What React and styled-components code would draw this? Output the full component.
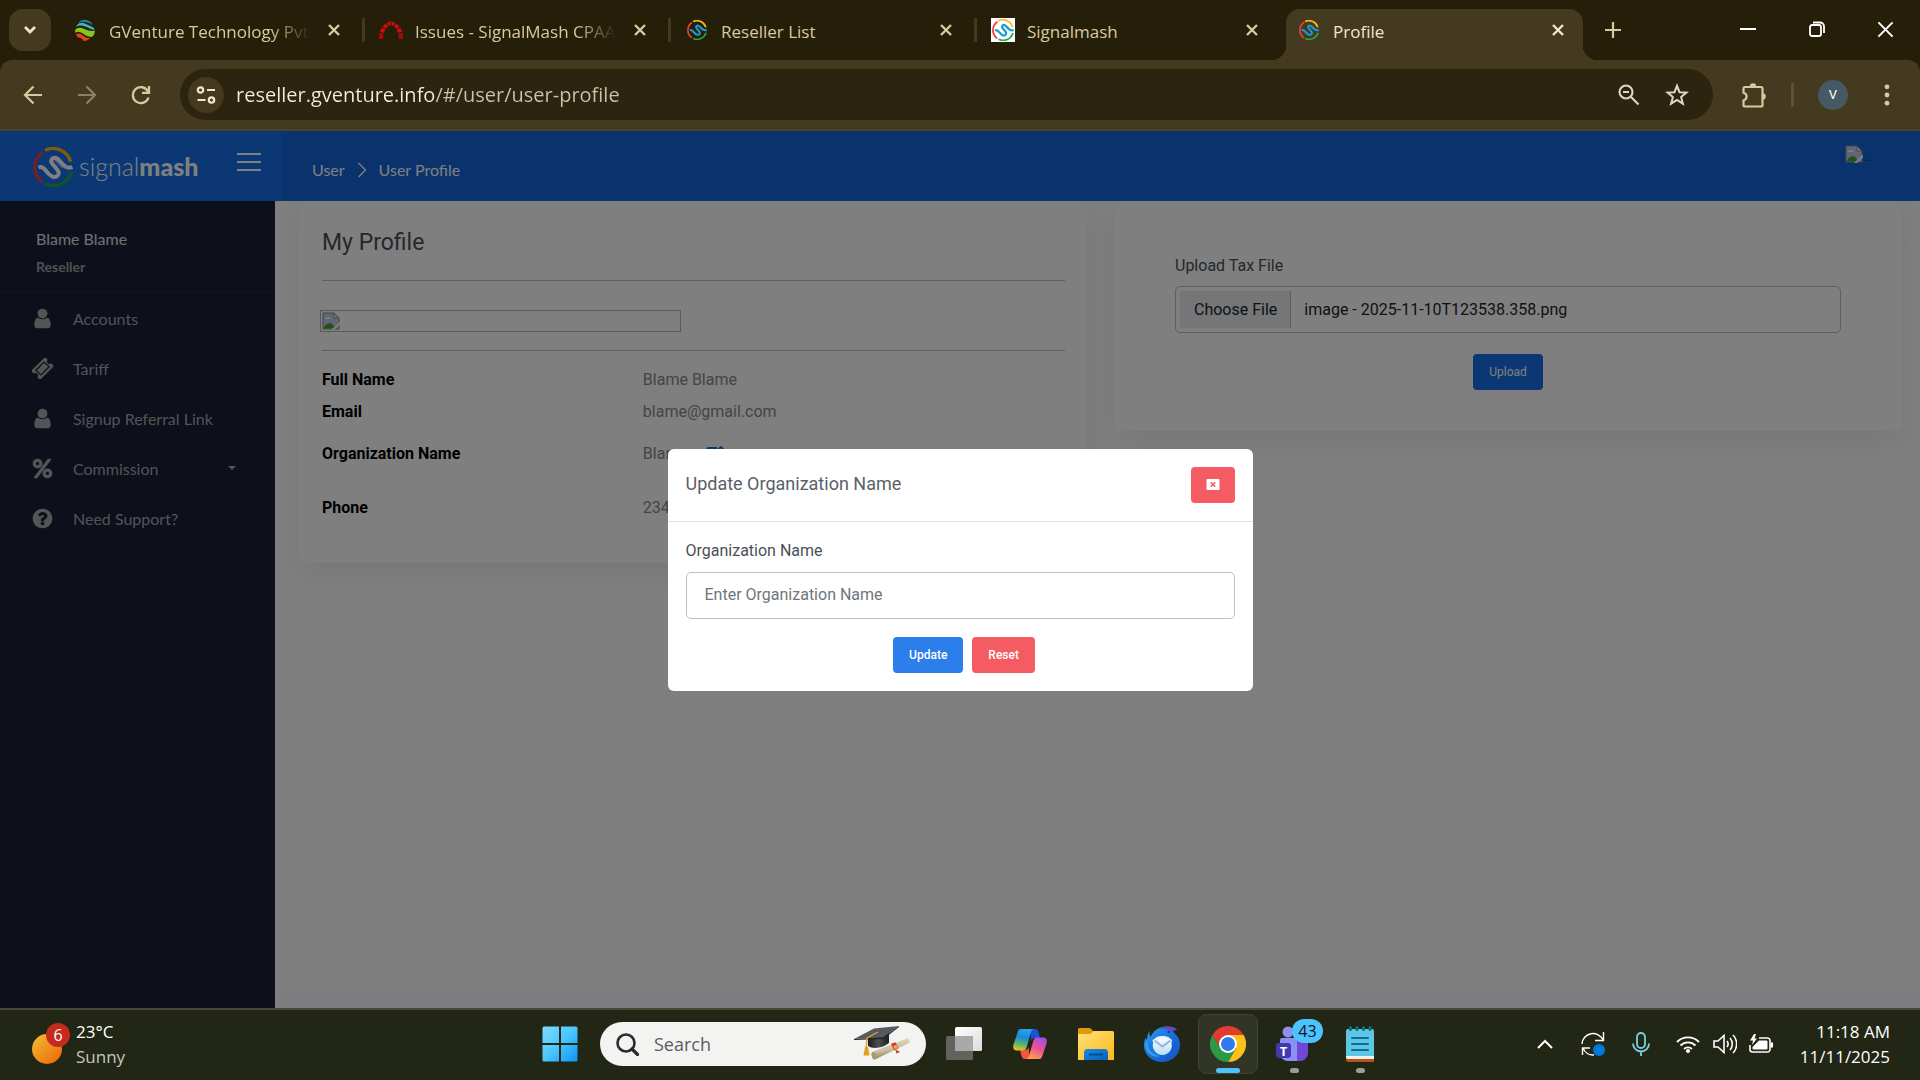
import React from "react";
import styled, { createGlobalStyle, css } from "styled-components";

const system = '"Open Sans", "Noto Sans", sans-serif';
const body = 'Roboto, "Liberation Sans", sans-serif';
const nav = 'Lato, "Open Sans", sans-serif';

const Global = createGlobalStyle`
  *, *::before, *::after { box-sizing: border-box; }
  html, body, #root { height: 100%; }
  body { margin: 0; background: #251f09; }
  button { font: inherit; color: inherit; border: 0; padding: 0; background: none; cursor: pointer; }
  svg { display: block; flex: none; }
`;

const Screen = styled.div`
  min-height: 100vh;
  display: flex;
  flex-direction: column;
  font-family: ${system};
`;

/* ---------- browser tab strip ---------- */

const TabStrip = styled.div`
  height: 60px;
  padding: 9px 0 0 9px;
  display: flex;
  background: #251f09;
  color: #d9c9a0;
`;

const TabSearch = styled.button`
  width: 42px;
  height: 42px;
  margin-right: 8px;
  border-radius: 14px;
  background: #433a1f;
  display: grid;
  place-items: center;
  flex: none;
`;

const flare = css`
  content: "";
  position: absolute;
  bottom: 0;
  width: 14px;
  height: 14px;
`;

const Tab = styled.div`
  position: relative;
  flex: 0 1 ${(p) => (p.$active ? 297 : 306)}px;
  min-width: 0;
  height: ${(p) => (p.$active ? 51 : 42)}px;
  padding: ${(p) => (p.$active ? "0 13px 9px 11px" : "0 19px 0 14px")};
  margin-left: ${(p) => (p.$active ? 3 : 0)}px;
  display: flex;
  align-items: center;
  gap: 12px;
  border-radius: 14px 14px 0 0;
  ${(p) =>
    p.$active
      ? css`
          background: #433a1f;
          color: #efe6cf;
          &::before { ${flare} right: 100%; background: radial-gradient(circle at 0 0, transparent 14px, #433a1f 14px); }
          &::after { ${flare} left: 100%; background: radial-gradient(circle at 100% 0, transparent 14px, #433a1f 14px); }
        `
      : ""}
`;

const TabDivider = styled.span`
  width: 3px;
  height: 24px;
  margin: 9px 0 0 -3px;
  background: #433a1f;
  flex: none;
`;

const TabTitle = styled.button`
  flex: 1;
  min-width: 0;
  height: 28px;
  margin-top: 3px;
  overflow: hidden;
  white-space: nowrap;
  text-align: left;
  font-size: 17px;
  line-height: 28px;
  ${(p) => (p.$fade ? "mask-image: linear-gradient(to left, transparent, #000 40px);" : "")}
`;

const Favicon = styled.span`
  width: 24px;
  height: 24px;
  display: grid;
  place-items: center;
  flex: none;
  background: ${(p) => (p.$plate ? "#fff" : "transparent")};
`;

const TabClose = styled.button`
  width: 24px;
  height: 24px;
  display: grid;
  place-items: center;
  flex: none;
`;

const NewTab = styled.button`
  width: 42px;
  height: 42px;
  margin-left: 9px;
  display: grid;
  place-items: center;
  flex: none;
`;

const WindowControls = styled.div`
  margin: -9px 0 0 auto;
  display: flex;
  color: #fff;
`;

const WindowButton = styled.button`
  width: 69px;
  height: 58px;
  display: grid;
  place-items: center;
`;

/* ---------- browser toolbar ---------- */

const ToolbarBack = styled.div`
  background: #251f09;
`;

const Toolbar = styled.div`
  height: 71px;
  padding: 9px 12px 9px 12px;
  display: flex;
  align-items: center;
  background: #433a1f;
  border-radius: 12px 12px 0 0;
  border-bottom: 2px solid #4b4229;
  color: #d9c9a0;
`;

const NavButton = styled.button`
  width: 42px;
  height: 42px;
  margin-right: 12px;
  display: grid;
  place-items: center;
  flex: none;
  opacity: ${(p) => (p.disabled ? 0.5 : 1)};
`;

const AddressBar = styled.form`
  flex: 1;
  height: 51px;
  margin: 0 20px 0 6px;
  padding: 0 16px 0 8px;
  display: flex;
  align-items: center;
  border-radius: 26px;
  background: #2d240f;
  color: #e0d5c0;
`;

const SiteInfo = styled.button`
  width: 36px;
  height: 36px;
  border-radius: 50%;
  background: #433a1f;
  display: grid;
  place-items: center;
  flex: none;
`;

const Address = styled.input`
  flex: 1;
  min-width: 0;
  margin-left: 12px;
  padding: 0;
  border: 0;
  outline: 0;
  font: 20px/30px ${system};
  background: linear-gradient(to right, #f4ede0 198px, #cdc2ac 198px);
  background-clip: text;
  color: transparent;
`;

const AddressAction = styled.button`
  width: 40px;
  height: 40px;
  margin-left: 8px;
  display: grid;
  place-items: center;
`;

const ToolbarButton = styled.button`
  width: 42px;
  height: 42px;
  display: grid;
  place-items: center;
  flex: none;
`;

const ToolbarDivider = styled.span`
  width: 3px;
  height: 24px;
  margin: 0 19px 0 16px;
  background: #5e5335;
`;

const Avatar = styled.button`
  width: 30px;
  height: 30px;
  margin: 0 18px 0 5px;
  border-radius: 50%;
  background: #465a66;
  color: #fff;
  font: 13px/30px ${body};
  flex: none;
`;

/* ---------- reseller portal ---------- */

const Portal = styled.div`
  position: relative;
  flex: 1;
  display: flex;
  flex-direction: column;
  background: #fff;
  overflow: hidden;
`;

const Header = styled.header`
  height: 70px;
  display: flex;
  background: #1466da;
  color: #fff;
`;

const Brand = styled.div`
  width: 281px;
  padding: 0 20px 0 33px;
  display: flex;
  align-items: center;
  background: #1670ea;
`;

const BrandLink = styled.a`
  display: flex;
  align-items: center;
  gap: 6px;
  padding-top: 2px;
  color: #fff;
  text-decoration: none;
  font: 300 25px/30px ${nav};
  span { padding-bottom: 3px; }
  b { font-weight: 900; }
`;

const MenuToggle = styled.button`
  width: 24px;
  height: 24px;
  margin: 0 0 8px auto;
  display: grid;
  place-items: center;
`;

const Crumbs = styled.nav`
  padding: 7px 0 0 31px;
  display: flex;
  align-items: center;
  gap: 12px;
  font: 400 16px/24px ${nav};
  a { color: #fff; text-decoration: none; }
`;

const AccountMenu = styled.button`
  height: 18px;
  margin: 14px 47px 0 auto;
  display: flex;
  align-items: flex-end;
  gap: 1px;
  color: #333;
  font: 12px/12px ${body};
`;

const Shell = styled.div`
  flex: 1;
  display: flex;
`;

const Sidebar = styled.aside`
  width: 275px;
  background: #1a1e34;
  font-family: ${nav};
  flex: none;
`;

const Identity = styled.div`
  height: 92px;
  padding: 26px 36px 0;
  border-bottom: 1px solid #272c40;
`;

const IdentityName = styled.div`
  font-size: 16px;
  line-height: 24px;
  color: #e2e2e4;
`;

const IdentityRole = styled.div`
  margin-top: 4px;
  font-size: 14px;
  font-weight: 700;
  line-height: 24px;
  color: #a0a2a6;
`;

const MenuLink = styled.a`
  height: 50px;
  padding: 0 39px 0 31px;
  display: flex;
  align-items: center;
  color: #a6a8ac;
  font-size: 16px;
  text-decoration: none;
  span { margin-left: 19px; }
  svg { fill: currentColor; }
`;

const Caret = styled.i`
  margin-left: auto;
  border: 4px solid transparent;
  border-top-color: currentColor;
  border-bottom: 0;
`;

const Content = styled.main`
  flex: 1;
  min-width: 0;
  padding-left: 6px;
  display: flex;
  flex-direction: column;
  overflow: hidden;
  font-family: ${body};
`;

const Cards = styled.div`
  flex: 1;
  padding: 0 18px;
  display: grid;
  grid-template-columns: 1fr 1fr;
  gap: 27px;
  align-items: start;
`;

const Footer = styled.footer`
  height: 15px;
  background: #f8f9fd;
`;

const Card = styled.section`
  border-radius: 5px;
  background: #fff;
  box-shadow: 0 10px 32px rgba(8, 21, 66, 0.08);
  padding: ${(p) => p.$pad};
`;

const CardTitle = styled.h1`
  margin: 0 0 18px;
  font-size: 23px;
  font-weight: 400;
  line-height: 38px;
  color: #495057;
`;

const Rule = styled.hr`
  height: 1px;
  margin: 0;
  border: 0;
  background: #bfbfbf;
`;

const Photo = styled.div`
  width: 48%;
  height: 18px;
  margin: 31px 0 20px;
  outline: 1px solid #b4b4b4;
  outline-offset: 1px;
`;

const Facts = styled.dl`
  margin: 13px 0 0;
`;

const Fact = styled.div`
  height: ${(p) => p.$h}px;
  display: grid;
  grid-template-columns: 19fr 25fr;
  align-items: center;
  font-size: 16px;
  line-height: 24px;
  dt { font-weight: 700; color: #000; }
  dd { margin: 0; display: flex; align-items: center; gap: 18px; color: #848a90; }
`;

const EditButton = styled.button`
  color: #1670ea;
`;

const FieldLabel = styled.label`
  display: block;
  margin-bottom: ${(p) => p.$gap}px;
  font-size: 16px;
  line-height: 24px;
  color: #495057;
`;

const FilePicker = styled.div`
  position: relative;
  height: 47px;
  padding: 4px;
  display: flex;
  align-items: center;
  gap: 13px;
  border: 1px solid #bfbfbf;
  border-radius: 5px;
  font-size: 16px;
  color: #212529;
  input { position: absolute; inset: 0; width: 100%; opacity: 0; }
`;

const FileButton = styled.span`
  height: 37px;
  padding: 0 13px 0 14px;
  border-right: 1px solid #bfbfbf;
  background: #e9ecef;
  line-height: 37px;
`;

const Actions = styled.div`
  display: flex;
  justify-content: center;
  gap: 9px;
  margin-top: ${(p) => p.$top}px;
  padding-left: ${(p) => p.$shift || 0}px;
`;

const Button = styled.button`
  height: 36px;
  padding: 0 ${(p) => (p.$icon ? 15 : 16)}px;
  border-radius: 4px;
  background: ${(p) => (p.$danger ? "#f45b62" : p.$deep ? "#1670ea" : "#2c7eea")};
  color: #fff;
  font: ${(p) => (p.$deep ? 400 : 500)} 12px/36px ${body};
`;

const Backdrop = styled.div`
  position: absolute;
  inset: 0;
  display: grid;
  place-items: center;
  background: rgba(0, 0, 0, 0.5);
`;

const Dialog = styled.div`
  width: 585px;
  max-width: 100%;
  border-radius: 6px;
  background: #fff;
  font-family: ${body};
`;

const DialogHead = styled.div`
  padding: 18px;
  display: flex;
  align-items: flex-start;
  justify-content: space-between;
  border-bottom: 1px solid #dee2e6;
`;

const DialogTitle = styled.h2`
  margin: 0;
  font-size: 18px;
  font-weight: 400;
  line-height: 34px;
  color: #5b6068;
`;

const DialogBody = styled.form`
  padding: 17px 18px 18px;
`;

const TextField = styled.input`
  display: block;
  width: 100%;
  height: 47px;
  padding: 0 18px 2px;
  border: 1px solid #bfbfbf;
  border-radius: 5px;
  outline: 0;
  font: 16px/24px ${body};
  color: #212529;
  &::placeholder { color: #6f757a; opacity: 1; }
`;

/* ---------- taskbar ---------- */

const Taskbar = styled.footer`
  height: 72px;
  padding-bottom: 2px;
  display: grid;
  grid-template-columns: 1fr auto 1fr;
  background: #222615;
  border-top: 2px solid #46483a;
  color: #fff;
  font-size: 17px;
  line-height: 25px;
`;

const Weather = styled.button`
  justify-self: start;
  margin-left: 32px;
  display: flex;
  align-items: center;
  gap: 6px;
  text-align: left;
  span { display: block; }
  small { display: block; font-size: 17px; color: #c5c6c0; }
`;

const Apps = styled.div`
  display: flex;
  align-items: center;
`;

const AppSlot = styled.button`
  position: relative;
  width: 60px;
  height: 60px;
  margin: 0 3px;
  display: grid;
  place-items: center;
  border-radius: 8px;
  border: 1px solid ${(p) => (p.$active ? "#3f4234" : "transparent")};
  background: ${(p) => (p.$active ? "#313526" : "transparent")};
  ${(p) =>
    p.$running
      ? css`
          &::after {
            content: "";
            position: absolute;
            bottom: 0;
            left: calc(50% - ${p.$active ? 12 : 4}px);
            width: ${p.$active ? 24 : 9}px;
            height: 5px;
            border-radius: 3px;
            background: ${p.$active ? "#4cc2ff" : "#9b9c94"};
          }
        `
      : ""}
`;

const Count = styled.span`
  position: absolute;
  top: 4px;
  left: 27px;
  width: 31px;
  height: 24px;
  border-radius: 12px;
  background: #4cc2ff;
  color: #10171c;
  font-size: 16px;
  line-height: 24px;
`;

const SearchBox = styled.label`
  width: 326px;
  height: 44px;
  margin: 0 5px 0 7px;
  padding: 0 16px;
  display: flex;
  align-items: center;
  border-radius: 22px;
  background: #f3f3f2;
  input {
    flex: 1;
    min-width: 0;
    margin-left: 15px;
    padding: 0;
    border: 0;
    outline: 0;
    background: none;
    font: 18px/28px ${system};
    color: #5c5c5c;
  }
  input::placeholder { color: #5c5c5c; opacity: 1; }
`;

const Tray = styled.div`
  justify-self: end;
  margin-right: 30px;
  display: flex;
  align-items: center;
`;

const TrayButton = styled.button`
  width: ${(p) => p.$w}px;
  height: 48px;
  display: grid;
  place-items: center;
`;

const Clock = styled.button`
  width: 104px;
  margin-left: 3px;
  text-align: right;
  time { display: block; }
`;

/* ---------- drawings ---------- */

const Cross = ({ size = 12, w = 2.4 }) => (
  <svg width={size} height={size} viewBox="0 0 12 12" stroke="currentColor" strokeWidth={w} fill="none">
    <path d="M1 1l10 10M11 1L1 11" />
  </svg>
);

const Mark = ({ size, white }) => (
  <svg width={size} height={size} viewBox="0 0 40 40" fill="none" strokeLinecap="butt">
    <path d="M12 3.2A18.4 18.4 0 0 1 37.6 14.8" stroke="#fdb913" strokeWidth="3.2" />
    <path d="M10 5A18.4 18.4 0 0 0 9.6 35.4" stroke="#ee4036" strokeWidth="3.2" />
    <path d="M12 36.8A18.4 18.4 0 0 0 38 25.5" stroke="#22ab4b" strokeWidth="3.2" />
    <path
      d="M5.5 20.5c4-1.500 5.500 1 8.500 4.500s6 6.500 9.500 4.500c4-2.500 2-5.500-.5-8.500s-7-6.500-3.500-9.500c3.500-2.500 6.500 1.500 9.500 5s6 5.500 10.500 3.500"
      stroke={white ? "#fff" : "#1c9ad6"}
      strokeWidth="4"
    />
    <path d="M11 20.500l6.500 7.500M22 13l7.500 8" stroke={white ? "#fff" : "#1c9ad6"} strokeWidth="1.500" opacity=".5" />
  </svg>
);

const VentureIcon = () => (
  <svg width="20" height="22" viewBox="0 0 20 22">
    <path d="M3.500 3.500C6 0 13-.5 17 4.500l.5 1.500C13 3 8 2 3.500 3.500z" fill="#2b7f96" />
    <path d="M1 8c2-5 6-5 10-3 3 1.500 5 2 8 4l.3 2c-4-1-6.500-2.500-9.300-3.500C6.500 6 3.500 6.500 1 8z" fill="#39b3d6" />
    <path d="M0 11.500c1.500-3.500 5.500-3.500 9.500-1.500 3.500 1.700 7 2.500 10.300 1.500 0 3.500-1 5.500-3.300 6.500-3 0-5-1-8-3-4-2.300-6-3-8.200-1z" fill="#8cc21c" />
    <path d="M1 15.500c2-1.800 4.500-1 7 1s4.500 2.700 7 2.500c-1.500 1.700-4 3-6.500 3C7.500 19 4 18.500 2.500 18z" fill="#e9411b" />
  </svg>
);

const ArchIcon = () => (
  <svg width="24" height="18" viewBox="0 0 24 18" fill="#d00d0d">
    <path d="M0 12l4.500.5-.3 5.500H0zM19.500 12.500L24 12v6h-4.200z" fill="#a80808" />
    <path d="M.8 10.800l2-4.300 3.600 2-1.600 3.200zM3.500 5.500L7 2.200 9 5.600 6.800 7.700zM8 1.700L11.500 0v4.200L9.700 5zM12.500 0L16 1.700 14.300 5l-1.800-.8zM17 2.200l3.500 3.300-3.300 2.200L15 5.600zM21.200 6.500l2 4.300-4 .9-1.600-3.200z" />
  </svg>
);

const Broken = () => (
  <svg width="18" height="18" viewBox="0 0 18 18">
    <path d="M1 1h11l5 5v11H1z" fill="#bccdf0" stroke="#8f8f8f" />
    <path d="M12 1v5h5z" fill="#f1f1f1" stroke="#8f8f8f" />
    <path d="M3 7c0-2 2-2 2.500-1C6.500 4 9 5 8.500 7z" fill="#fff" />
    <path d="M1.500 16.500c2-5 7-7 10-3l1 3z" fill="#43a426" />
    <path d="M18 9.500L9 18h3l6-5.500z" fill="#fff" />
  </svg>
);

const glyphs = {
  user: "M1536 1399q0 109-62.500 187t-150.500 78h-854q-88 0-150.500-78t-62.500-187q0-85 8.500-160.500t31.500-152 58.500-131 94-89 134.500-34.500q131 128 313 128t313-128q76 0 134.500 34.500t94 89 58.500 131 31.500 152 8.500 160.500zm-256-887q0 159-112.500 271.500t-271.500 112.500-271.500-112.500-112.500-271.500 112.500-271.500 271.500-112.500 271.500 112.500 112.500 271.500z",
  ticket:
    "M1024 452l316 316-572 572-316-316zm-211 979l618-618q19-19 19-45t-19-45l-362-362q-18-18-45-18t-45 18l-618 618q-19 19-19 45t19 45l362 362q18 18 45 18t45-18zm889-637l-907 908q-37 37-90.500 37t-90.500-37l-126-126q56-56 56-136t-56-136-136-56-136 56l-125-126q-37-37-37-90.500t37-90.500l907-906q37-37 90.500-37t90.500 37l125 125q-56 56-56 136t56 136 136 56 136-56l126 125q37 37 37 90.500t-37 90.500z",
  percent:
    "M1408 1280q0-52-38-90t-90-38-90 38-38 90 38 90 90 38 90-38 38-90zm-768-768q0-52-38-90t-90-38-90 38-38 90 38 90 90 38 90-38 38-90zm1024 768q0 159-112.500 271.500t-271.500 112.500-271.500-112.500-112.500-271.500 112.500-271.500 271.500-112.500 271.500 112.500 112.500 271.500zm-96-1088q0 20-13 38l-1056 1408q-19 26-51 26h-160q-26 0-45-19t-19-45q0-20 13-38l1056-1408q19-26 51-26h160q26 0 45 19t19 45zm-672 320q0 159-112.500 271.500t-271.500 112.500-271.500-112.500-112.500-271.500 112.500-271.500 271.500-112.500 271.500 112.500 112.500 271.500z",
  help: "M1024 1376v-192q0-14-9-23t-23-9h-192q-14 0-23 9t-9 23v192q0 14 9 23t23 9h192q14 0 23-9t9-23zm256-672q0-88-55.500-163t-138.500-116-170-41q-243 0-371 213-15 24 8 42l132 100q7 6 19 6 16 0 25-12 53-68 86-92 34-24 86-24 48 0 85.500 26t37.500 59q0 38-20 61t-68 45q-63 28-115.500 86.500t-52.500 125.500v36q0 14 9 23t23 9h192q14 0 23-9t9-23q0-19 21.500-49.500t54.500-49.500q32-18 49-28.500t46-35 44.500-48 28-60.500 12.500-81zm384 192q0 209-103 385.500t-279.500 279.500-385.500 103-385.500-103-279.500-279.500-103-385.500 103-385.500 279.500-279.500 385.500-103 385.500 103 279.500 279.500 103 385.500z",
};

const Glyph = ({ name }) => (
  <svg width="23" height="23" viewBox="0 0 1792 1792">
    <path d={glyphs[name]} />
  </svg>
);

const SunIcon = () => (
  <svg width="38" height="42" viewBox="0 0 38 42">
    <defs>
      <linearGradient id="sun" x1="0" y1="0" x2="1" y2="1">
        <stop offset="0.1" stopColor="#f2b632" />
        <stop offset="0.9" stopColor="#ef6a0c" />
      </linearGradient>
    </defs>
    <circle cx="15" cy="26" r="15" fill="url(#sun)" />
    <circle cx="26" cy="12" r="12" fill="#c42b1c" />
    <text x="26" y="18" fontSize="16" textAnchor="middle" fill="#fff">6</text>
  </svg>
);

const StartIcon = () => (
  <svg width="36" height="36" viewBox="0 0 36 36">
    <defs>
      <linearGradient id="win" x1="0" y1="0" x2="36" y2="36" gradientUnits="userSpaceOnUse">
        <stop offset="0" stopColor="#7fdcff" />
        <stop offset="0.5" stopColor="#4ac6ff" />
        <stop offset="1" stopColor="#0a93f5" />
      </linearGradient>
    </defs>
    <path d="M2 .5h15v16.500H.5V2A1.500 1.500 0 0 1 2 .5zM19 .5h15A1.500 1.500 0 0 1 35.500 2v15H19zM.5 19H17v16.500H2A1.500 1.500 0 0 1 .5 34zM19 19h16.500v15a1.500 1.500 0 0 1-1.500 1.500H19z" fill="url(#win)" />
  </svg>
);

const GraduateIcon = () => (
  <svg width="56" height="36" viewBox="0 0 56 36">
    <defs>
      <linearGradient id="cap" x1="0" y1="0" x2="1" y2="0">
        <stop offset="0" stopColor="#1d1f22" />
        <stop offset="0.5" stopColor="#4b4e53" />
        <stop offset="1" stopColor="#1d1f22" />
      </linearGradient>
      <linearGradient id="scroll" x1="0" y1="0" x2="0.3" y2="1">
        <stop offset="0" stopColor="#efe6cf" />
        <stop offset="0.6" stopColor="#cdbf9f" />
        <stop offset="1" stopColor="#8c7d5d" />
      </linearGradient>
    </defs>
    <path d="M14 11v9c5 3.500 15 2 21-3V7z" fill="url(#cap)" />
    <path d="M0 13L20 2.500 45 0 29 11.500z" fill="#565a60" />
    <path d="M0 13l29-1.500L45 0v1L29.500 13 0 14z" fill="#222427" />
    <path d="M24 6L13 12l-.8 10" stroke="#e0a21c" strokeWidth="1.400" fill="none" />
    <path d="M11 21h3l1.500 8.500H9.500z" fill="#e0a21c" />
    <path d="M18 26L53 12.500c2-.3 3.500 3 2 4.500L21 33.500c-3 0-4.500-5-3-7.500z" fill="url(#scroll)" />
    <ellipse cx="20" cy="29.800" rx="2" ry="3.800" fill="#a89775" transform="rotate(-20 20 29.800)" />
    <path d="M37 17.800l4.500-1.500 3 6-4.500 2z" fill="#d33a32" />
    <path d="M41 23l5 3-3.500 1.500z" fill="#d33a32" />
    <circle cx="41.500" cy="21" r="2" fill="#e7b24c" />
  </svg>
);

const TaskViewIcon = () => (
  <svg width="36" height="36" viewBox="0 0 36 36">
    <defs>
      <linearGradient id="tv" x1="0" y1="0" x2="1" y2="1">
        <stop offset="0" stopColor="#fff" />
        <stop offset="1" stopColor="#dcdcdc" />
      </linearGradient>
    </defs>
    <rect x="0" y="10" width="27" height="24" rx="1.500" fill="#62625f" />
    <rect x="9" y="1" width="27" height="24" rx="1.500" fill="url(#tv)" />
    <path d="M9 10h18v15H9z" fill="#a9a9a9" />
  </svg>
);

const CopilotIcon = () => (
  <svg width="36" height="34" viewBox="0 0 36 34">
    <defs>
      <linearGradient id="cpa" x1="0.4" y1="0" x2="0.2" y2="1">
        <stop offset="0" stopColor="#25a3f2" />
        <stop offset="0.35" stopColor="#1b86dd" />
        <stop offset="0.7" stopColor="#5fb866" />
        <stop offset="1" stopColor="#f2c41a" />
      </linearGradient>
      <linearGradient id="cpb" x1="0.8" y1="0" x2="0.3" y2="1">
        <stop offset="0" stopColor="#a04fe8" />
        <stop offset="0.5" stopColor="#ec4f95" />
        <stop offset="1" stopColor="#ffa24c" />
      </linearGradient>
    </defs>
    <path d="M18 2h5c2 0 3 1 3.500 3l1.500 6h-5c-2 0-3 1-3.500 3z" fill="#1d4fd8" />
    <path d="M18 32h-5c-2 0-3-1-3.500-3L8 23h5c2 0 3-1 3.500-3z" fill="#f0563a" />
    <path d="M9 2h13c-2 .5-2.700 2-3.300 4l-4 14c-.7 2.500-2 3.500-4.500 3.500H5C1.500 23.500.5 21 1.500 17.500l4-12C6.300 3 7 2 9 2z" fill="url(#cpa)" />
    <path d="M27 32H14c2-.5 2.700-2 3.300-4l4-14c.7-2.500 2-3.500 4.500-3.500H31c3.500 0 4.500 2.500 3.500 6l-4 12C29.700 31 29 32 27 32z" fill="url(#cpb)" />
  </svg>
);

const FolderIcon = () => (
  <svg width="36" height="34" viewBox="0 0 36 34">
    <defs>
      <linearGradient id="fld" x1="0" y1="0" x2="1" y2="1">
        <stop offset="0" stopColor="#ffe07a" />
        <stop offset="1" stopColor="#fbb917" />
      </linearGradient>
      <linearGradient id="fldb" x1="0" y1="0" x2="1" y2="1">
        <stop offset="0" stopColor="#1a8be0" />
        <stop offset="1" stopColor="#0a62b5" />
      </linearGradient>
    </defs>
    <path d="M1.500 1H11c1 0 1.500.3 2.200 1L16 5v8H0V2.500A1.500 1.500 0 0 1 1.500 1z" fill="#dd9a09" />
    <path d="M0 7h11c1 0 2-.3 2.700-1L15 4.500c.5-.4 1-.5 1.500-.5h18A1.500 1.500 0 0 1 36 5.500V33H0z" fill="url(#fld)" />
    <path d="M6 33v-7.500A3.500 3.500 0 0 1 9.500 22h17a3.500 3.500 0 0 1 3.500 3.500V33z" fill="url(#fldb)" />
    <path d="M11 27.500h14" stroke="#0b4a8a" strokeWidth="2" />
  </svg>
);

const BirdIcon = () => (
  <svg width="36" height="36" viewBox="0 0 36 36">
    <defs>
      <linearGradient id="bird" x1="0" y1="0" x2="1" y2="1">
        <stop offset="0" stopColor="#2fa0f5" />
        <stop offset="0.6" stopColor="#1468d8" />
        <stop offset="1" stopColor="#1c4fc0" />
      </linearGradient>
      <linearGradient id="mail" x1="0" y1="0" x2="0" y2="1">
        <stop offset="0" stopColor="#f4faff" />
        <stop offset="1" stopColor="#b9dcf8" />
      </linearGradient>
    </defs>
    <path d="M6 4.500C5 7 5.500 9.500 6.500 11 9 6 13 1.500 20 .7c6-.7 11 .8 13 3.300-3.500-.3-4.500 1-3.500 2.500C34 9.500 36 14 36 19c0 10-8 17-18 17S0 28.500 0 19.500c0-3 .6-5.500 1.500-7.500l1.500 2c0-4 1-7 3-9.500z" fill="url(#bird)" />
    <path d="M15.500 3C20-.5 30-.5 33 4c-3.500-.3-5 .3-5.500 2C24 3 20 2 15.500 3z" fill="#6d45c4" />
    <path d="M3 14c0 10 6 15 14 16C9 33 2 27 1.500 19z" fill="#39b4f2" opacity=".7" />
    <path d="M10.500 13h16a2 2 0 0 1 .8 3.500 9.500 9.500 0 1 1-18 0A2 2 0 0 1 10.500 13z" fill="url(#mail)" />
    <ellipse cx="18.500" cy="13.500" rx="8" ry="3.500" fill="#edf6fe" />
    <path d="M10.500 14.500l8 6 8-6" stroke="#8fb4dc" strokeWidth="1.800" fill="none" />
    <circle cx="24.500" cy="6" r="1" fill="#0c2d6b" />
  </svg>
);

const ChromeIcon = () => (
  <svg width="36" height="36" viewBox="0 0 36 36">
    <path d="M18 9h15.600A18 18 0 0 1 18 36l7.800-13.500z" fill="#fbc116" />
    <path d="M18 9h15.600A18 18 0 0 0 2.400 9l7.800 13.500z" fill="#e33b2e" />
    <path d="M10.200 22.500L2.400 9A18 18 0 0 0 18 36l7.800-13.500z" fill="#2a9a47" />
    <circle cx="18" cy="18" r="9" fill="#fff" />
    <circle cx="18" cy="18" r="7" fill="#2f7bee" />
  </svg>
);

const TeamsIcon = () => (
  <svg width="36" height="36" viewBox="2 0 36 36">
    <circle cx="14" cy="6" r="5.500" fill="#8f8ff0" />
    <path d="M20 12h11a3 3 0 0 1 3 3v12a8 8 0 0 1-8 8h-6z" fill="#7147d6" />
    <path d="M8 12h12a3 3 0 0 1 3 3v20H14a8 8 0 0 1-8-8V14a2 2 0 0 1 2-2z" fill="#8b90f5" />
    <rect x="2" y="17" width="15" height="15" rx="3" fill="#4338b0" />
    <text x="9.500" y="29.500" fontSize="13" fontWeight="700" textAnchor="middle" fill="#fff">T</text>
  </svg>
);

const NotesIcon = () => (
  <svg width="28" height="36" viewBox="0 0 28 36">
    <path d="M0 29h28v7H2a2 2 0 0 1-2-2z" fill="#b4541a" />
    <path d="M0 27h28v6H2a2 2 0 0 1-2-2z" fill="#f1f1f1" />
    <path d="M2 3h24a2 2 0 0 1 2 2v25H0V5a2 2 0 0 1 2-2z" fill="#5cc6e6" />
    <path d="M6 12h16M6 18h16M6 24h16" stroke="#0d6c8f" strokeWidth="2" strokeLinecap="round" />
    <path d="M4.500 1.500v2M11 1.500v2M17.500 1.500v2M24 1.500v2" stroke="#0d6c8f" strokeWidth="3" strokeLinecap="round" />
  </svg>
);

const tabs = [
  { title: "GVenture Technology Pvt.", icon: <VentureIcon />, fade: true, divider: true },
  { title: "Issues - SignalMash CPAA", icon: <ArchIcon />, fade: true, divider: true },
  { title: "Reseller List", icon: <Mark size={20} />, divider: true },
  { title: "Signalmash", icon: <Mark size={22} />, plate: true },
  { title: "Profile", icon: <Mark size={20} />, active: true },
];

const menu = [
  ["user", "Accounts"],
  ["ticket", "Tariff"],
  ["user", "Signup Referral Link"],
  ["percent", "Commission", true],
  ["help", "Need Support?"],
];

const stroke = { fill: "none", stroke: "currentColor" };

function BrowserChrome() {
  return (
    <>
      <TabStrip>
        <TabSearch aria-label="Search tabs">
          <svg width="14" height="10" viewBox="0 0 14 10" {...stroke} stroke="#efe6cf" strokeWidth="2.800">
            <path d="M2 2l5 5 5-5" />
          </svg>
        </TabSearch>
        {tabs.map((t) => (
          <React.Fragment key={t.title}>
            <Tab $active={t.active}>
              <Favicon $plate={t.plate}>{t.icon}</Favicon>
              <TabTitle $fade={t.fade}>{t.title}</TabTitle>
              <TabClose aria-label={`Close ${t.title}`}><Cross /></TabClose>
            </Tab>
            {t.divider && <TabDivider />}
          </React.Fragment>
        ))}
        <NewTab aria-label="New tab">
          <svg width="16" height="16" viewBox="0 0 16 16" {...stroke} strokeWidth="2.200"><path d="M8 0v16M0 8h16" /></svg>
        </NewTab>
        <WindowControls>
          <WindowButton aria-label="Minimize">
            <svg width="16" height="16" viewBox="0 0 16 16" {...stroke} strokeWidth="2"><path d="M0 8h16" /></svg>
          </WindowButton>
          <WindowButton aria-label="Restore">
            <svg width="16" height="16" viewBox="0 0 16 16" {...stroke} strokeWidth="1.800">
              <rect x="1" y="4" width="11" height="11" rx="2" />
              <path d="M4 1.500h7a4 4 0 0 1 4 4V12" />
            </svg>
          </WindowButton>
          <WindowButton aria-label="Close window"><Cross size={17} w={1.400} /></WindowButton>
        </WindowControls>
      </TabStrip>
      <ToolbarBack>
        <Toolbar>
          <NavButton aria-label="Back">
            <svg width="20" height="20" viewBox="0 0 20 20" {...stroke} strokeWidth="2.200"><path d="M19 10H2.500M10.500 1.500L2 10l8.500 8.500" /></svg>
          </NavButton>
          <NavButton aria-label="Forward" disabled>
            <svg width="20" height="20" viewBox="0 0 20 20" {...stroke} strokeWidth="2.200"><path d="M1 10h16.500M9.500 1.500L18 10l-8.500 8.500" /></svg>
          </NavButton>
          <NavButton aria-label="Reload">
            <svg width="20" height="20" viewBox="0 0 20 20" {...stroke} strokeWidth="2.300">
              <path d="M17.500 12.500A8 8 0 1 1 17 6.500M18 1v6.800h-7" />
            </svg>
          </NavButton>
          <AddressBar onSubmit={(e) => e.preventDefault()}>
            <SiteInfo type="button" aria-label="Site information">
              <svg width="20" height="18" viewBox="0 0 20 18" {...stroke} stroke="#efe6cf" strokeWidth="2.200">
                <circle cx="4.500" cy="4" r="2.700" />
                <path d="M11 4h8M1.500 14h8" />
                <circle cx="15.500" cy="14" r="2.700" />
              </svg>
            </SiteInfo>
            <Address aria-label="Address" defaultValue="reseller.gventure.info/#/user/user-profile" />
            <AddressAction type="button" aria-label="Zoom">
              <svg width="22" height="22" viewBox="0 0 22 22" {...stroke} strokeWidth="2.100">
                <circle cx="8" cy="8" r="6.500" />
                <path d="M12.800 12.800L20.500 20.500M5 8h6" />
              </svg>
            </AddressAction>
            <AddressAction type="button" aria-label="Bookmark">
              <svg width="24" height="24" viewBox="0 0 24 24" {...stroke} strokeWidth="2">
                <path d="M12 2.800l2.500 6.400 6.900.4-5.300 4.400 1.800 6.700-5.900-3.800-5.900 3.800 1.800-6.700L2.600 9.600l6.900-.4z" />
              </svg>
            </AddressAction>
          </AddressBar>
          <ToolbarButton aria-label="Extensions">
            <svg width="26" height="26" viewBox="0 0 26 26" {...stroke} strokeWidth="2.200">
              <path d="M4 5h16a1.500 1.500 0 0 1 1.500 1.500V23a1.500 1.500 0 0 1-1.500 1.500H4A1.500 1.500 0 0 1 2.500 23v-4.500a4 4 0 0 0 0-7.800V6.500A1.500 1.500 0 0 1 4 5z" />
              <path d="M8.800 4.500a3.200 3.200 0 0 1 6.400 0zM21.500 11.300a3.200 3.200 0 0 1 0 6.400z" fill="currentColor" stroke="none" />
            </svg>
          </ToolbarButton>
          <ToolbarDivider />
          <Avatar aria-label="Profile v">V</Avatar>
          <ToolbarButton aria-label="Browser menu">
            <svg width="6" height="22" viewBox="0 0 6 22" fill="currentColor">
              <circle cx="3" cy="2.800" r="2.400" /><circle cx="3" cy="11" r="2.400" /><circle cx="3" cy="19.200" r="2.400" />
            </svg>
          </ToolbarButton>
        </Toolbar>
      </ToolbarBack>
    </>
  );
}

function ResellerPortal() {
  return (
    <Portal>
      <Header>
        <Brand>
          <BrandLink href="#/">
            <Mark size={40} white />
            <span>signal<b>mash</b></span>
          </BrandLink>
          <MenuToggle aria-label="Toggle menu">
            <svg width="24" height="20" viewBox="0 0 24 20" {...stroke} strokeWidth="2"><path d="M0 2h24M0 10h24M0 18h24" /></svg>
          </MenuToggle>
        </Brand>
        <Crumbs aria-label="Breadcrumb">
          <a href="#/user">User</a>
          <svg width="10" height="16" viewBox="0 0 10 16" {...stroke} strokeWidth="1.300"><path d="M1.500 1l7 7-7 7" /></svg>
          <a href="#/user/user-profile">User Profile</a>
        </Crumbs>
        <AccountMenu aria-label="Account"><Broken /><span>...</span></AccountMenu>
      </Header>
      <Shell>
        <Sidebar>
          <Identity>
            <IdentityName>Blame Blame</IdentityName>
            <IdentityRole>Reseller</IdentityRole>
          </Identity>
          <nav>
            {menu.map(([icon, label, more]) => (
              <MenuLink key={label} href="#/">
                <Glyph name={icon} />
                <span>{label}</span>
                {more && <Caret />}
              </MenuLink>
            ))}
          </nav>
        </Sidebar>
        <Content>
          <Cards>
            <Card $pad="23px 22px 27px 23px">
              <CardTitle>My Profile</CardTitle>
              <Rule />
              <Photo role="img" aria-label="Profile photo"><Broken /></Photo>
              <Rule />
              <Facts>
                <Fact $h={32}><dt>Full Name</dt><dd>Blame Blame</dd></Fact>
                <Fact $h={32}><dt>Email</dt><dd>blame@gmail.com</dd></Fact>
                <Fact $h={52}>
                  <dt>Organization Name</dt>
                  <dd>
                    Blame
                    <EditButton aria-label="Edit organization name">
                      <svg width="18" height="16" viewBox="0 0 18 16" {...stroke} strokeWidth="2">
                        <path d="M11 2H3a2 2 0 0 0-2 2v9a2 2 0 0 0 2 2h9a2 2 0 0 0 2-2v-3M7 10l1-3 7-6 2 2-7 6z" />
                      </svg>
                    </EditButton>
                  </dd>
                </Fact>
                <Fact $h={56}><dt>Phone</dt><dd>234</dd></Fact>
              </Facts>
            </Card>
            <Card $pad="53px 61px 41px">
              <FieldLabel htmlFor="tax-file" $gap={8}>Upload Tax File</FieldLabel>
              <FilePicker>
                <FileButton>Choose File</FileButton>
                <span>image - 2025-11-10T123538.358.png</span>
                <input id="tax-file" type="file" />
              </FilePicker>
              <Actions $top={21}><Button $deep>Upload</Button></Actions>
            </Card>
          </Cards>
          <Footer />
        </Content>
      </Shell>
      <Backdrop>
        <Dialog role="dialog" aria-labelledby="dialog-title">
          <DialogHead>
            <DialogTitle id="dialog-title">Update Organization Name</DialogTitle>
            <Button $danger $icon aria-label="Close">
              <svg width="14" height="12" viewBox="0 0 14 12">
                <rect x="0.500" width="13" height="11" rx="1" fill="#fff" />
                <path d="M4.800 3.300l4.400 4.400M9.200 3.300L4.800 7.700" stroke="#f45b62" strokeWidth="1.600" />
              </svg>
            </Button>
          </DialogHead>
          <DialogBody onSubmit={(e) => e.preventDefault()}>
            <FieldLabel htmlFor="org-name" $gap={9}>Organization Name</FieldLabel>
            <TextField id="org-name" placeholder="Enter Organization Name" />
            <Actions $top={18} $shift={8}>
              <Button type="submit">Update</Button>
              <Button type="reset" $danger>Reset</Button>
            </Actions>
          </DialogBody>
        </Dialog>
      </Backdrop>
    </Portal>
  );
}

function WindowsTaskbar() {
  return (
    <Taskbar>
      <Weather>
        <SunIcon />
        <span>23°C<small>Sunny</small></span>
      </Weather>
      <Apps>
        <AppSlot aria-label="Start"><StartIcon /></AppSlot>
        <SearchBox>
          <svg width="23" height="23" viewBox="0 0 23 23" {...stroke} stroke="#2b2b2b" strokeWidth="2.600">
            <circle cx="10" cy="10" r="8.500" />
            <path d="M16 16l5.500 5.500" strokeWidth="3.200" strokeLinecap="round" />
          </svg>
          <input placeholder="Search" aria-label="Search" />
          <GraduateIcon />
        </SearchBox>
        <AppSlot aria-label="Task view"><TaskViewIcon /></AppSlot>
        <AppSlot aria-label="Copilot"><CopilotIcon /></AppSlot>
        <AppSlot aria-label="File Explorer"><FolderIcon /></AppSlot>
        <AppSlot aria-label="Thunderbird"><BirdIcon /></AppSlot>
        <AppSlot aria-label="Chrome" $active $running><ChromeIcon /></AppSlot>
        <AppSlot aria-label="Teams" $running><TeamsIcon /><Count>43</Count></AppSlot>
        <AppSlot aria-label="Notepad" $running><NotesIcon /></AppSlot>
      </Apps>
      <Tray>
        <TrayButton $w={48} aria-label="Hidden icons">
          <svg width="16" height="10" viewBox="0 0 16 10" {...stroke} strokeWidth="2"><path d="M1 9l7-7 7 7" /></svg>
        </TrayButton>
        <TrayButton $w={48} aria-label="Sync">
          <svg width="24" height="24" viewBox="0 0 24 24" {...stroke} strokeWidth="1.400">
            <path d="M1 12A11 11 0 0 1 22 8M22.500 0v8.500H14M1.500 23v-7H9M2 16a11 11 0 0 0 11 7" />
            <circle cx="18" cy="18" r="6" fill="#0078d7" stroke="none" />
          </svg>
        </TrayButton>
        <TrayButton $w={48} aria-label="Microphone">
          <svg width="18" height="24" viewBox="0 0 18 24" {...stroke} stroke="#76d3e6" strokeWidth="1.800">
            <rect x="5" y="1" width="8" height="15" rx="4" />
            <path d="M1 11.500a8 8 0 0 0 16 0M9 19.500V24" />
          </svg>
        </TrayButton>
        <TrayButton $w={46} aria-label="Network">
          <svg width="24" height="18" viewBox="0 0 24 18" {...stroke} strokeWidth="1.900">
            <path d="M1 7a15.500 15.500 0 0 1 22 0M4.500 10.500a10.600 10.600 0 0 1 15 0M8 14a5.700 5.700 0 0 1 8 0" />
            <circle cx="12" cy="16" r="2" fill="currentColor" stroke="none" />
          </svg>
        </TrayButton>
        <TrayButton $w={28} aria-label="Volume">
          <svg width="24" height="20" viewBox="0 0 24 20" {...stroke} strokeWidth="1.600">
            <path d="M1 7v6h4l6 5.500V1.500L5 7zM14 7a5 5 0 0 1 0 6M17 4a9 9 0 0 1 0 12M20 1a13 13 0 0 1 0 18" />
          </svg>
        </TrayButton>
        <TrayButton $w={44} aria-label="Battery">
          <svg width="24" height="20" viewBox="0 0 24 20" {...stroke} strokeWidth="1.600">
            <path d="M10 4h8.500a2.500 2.500 0 0 1 2.500 2.500v9a2.500 2.500 0 0 1-2.500 2.500H3.500A2.500 2.500 0 0 1 1 15.500V11" />
            <path d="M10 6.500h7.500a1 1 0 0 1 1 1v7a1 1 0 0 1-1 1H4.500a1 1 0 0 1-1-1V13zM21.500 8.500H24v5h-2.500zM5 0L1 6.500h3L3 11l5-6.500H5.500L7 0z" fill="currentColor" stroke="none" />
          </svg>
        </TrayButton>
        <Clock>
          <time>11:18 AM</time>
          <time>11/11/2025</time>
        </Clock>
      </Tray>
    </Taskbar>
  );
}

export default function App() {
  return (
    <Screen>
      <Global />
      <BrowserChrome />
      <ResellerPortal />
      <WindowsTaskbar />
    </Screen>
  );
}
